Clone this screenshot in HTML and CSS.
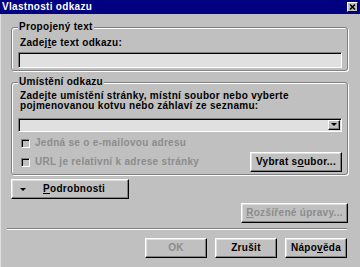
FILE: index.html
```html
<!DOCTYPE html>
<html lang="cs">
<head>
  <meta charset="UTF-8">
  <meta name="viewport" content="width=device-width, initial-scale=1.0">
  <title>Vlastnosti odkazu</title>
  <link rel="stylesheet" href="styles.css">
</head>
<body>
  <div class="dialog">
    <div class="titlebar">
      <span class="title">Vlastnosti odkazu</span>
      <span class="close-btn">
        <svg width="9" height="8" viewBox="0 0 9 8">
          <path d="M2 1.5 L7 6.5 M7 1.5 L2 6.5" stroke="#000" stroke-width="1.6" fill="none" />
        </svg>
      </span>
    </div>

    <div class="content">
      <fieldset class="group group-text">
        <legend>Propojený text</legend>
        <label class="field-label">Zadej<u>t</u>e text odkazu:</label>
        <div class="textbox"></div>
      </fieldset>

      <fieldset class="group group-place">
        <legend>Umístění odkazu</legend>
        <p class="hint">Zadejte umístění stránky, místní soubor nebo vyberte<br>pojmenovanou kotvu nebo záhlaví ze seznamu:</p>
        <div class="combo">
          <span class="combo-arrow"></span>
        </div>
        <div class="check disabled">
          <span class="box"></span>
          <span>Jedná se o e-mailovou adresu</span>
        </div>
        <div class="check-row">
          <div class="check disabled">
            <span class="box"></span>
            <span>URL je relativní k adrese stránky</span>
          </div>
          <button class="btn btn-browse">Vybrat s<u>o</u>ubor...</button>
        </div>
      </fieldset>

      <button class="btn btn-more">
        <span class="more-arrow"></span>
        <span class="more-text"><u>P</u>odrobnosti</span>
      </button>

      <div class="advanced-row">
        <button class="btn btn-advanced" disabled><u>R</u>ozšířené úpravy...</button>
      </div>

      <div class="separator"></div>

      <div class="footer">
        <button class="btn" disabled>OK</button>
        <button class="btn">Zrušit</button>
        <button class="btn">Nápo<u>v</u>ěda</button>
      </div>
    </div>
  </div>
</body>
</html>
```

FILE: styles.css
```css
body {
  margin: 0;
  background-color: #c0c0c0;
}

.dialog {
  width: 360px;
  height: 267px;
  overflow: hidden;
  background-color: #c0c0c0;
  box-shadow: inset 1px 0 0 #dfdfdf;
  font-family: "Liberation Sans", Arial, sans-serif;
  font-size: 10px;
  font-weight: bold;
  letter-spacing: 0.3px;
  color: #000;
}

.titlebar {
  height: 14px;
  background-color: #000080;
  color: #fff;
  display: flex;
  justify-content: space-between;
  align-items: center;
  padding: 0 2px;
  line-height: 14px;
}

.close-btn {
  box-sizing: border-box;
  width: 11px;
  height: 10px;
  background-color: #c0c0c0;
  border: 1px solid;
  border-color: #fff #000 #000 #fff;
  display: flex;
  align-items: center;
  justify-content: center;
}

.close-btn svg {
  display: block;
}

.content {
  padding: 7px 12px 0 11px;
}

.group {
  margin: 0;
  min-width: 0;
  padding: 4px 5px 2px 6px;
  border: 1px solid #808080;
  border-radius: 3px;
  box-shadow: inset 1px 1px 0 #fff, 1px 1px 0 #fff;
}

.group legend {
  padding: 0 1px;
  line-height: 12px;
  background-color: #c0c0c0;
}

.group-place {
  margin-top: 5px;
  padding-top: 3px;
}

.field-label {
  display: block;
  line-height: 12px;
  padding-left: 2px;
  margin-bottom: 3px;
}

.textbox,
.combo {
  box-sizing: border-box;
  height: 16px;
  background-color: #e0e0e0;
  border: 1px solid;
  border-color: #808080 #fff #fff #808080;
  box-shadow: inset 1px 1px 0 #000, inset -1px -1px 0 #dfdfdf;
}

.hint {
  margin: 0;
  padding-left: 2px;
  line-height: 10px;
}

.combo {
  margin-top: 7px;
  height: 14px;
  display: flex;
  justify-content: flex-end;
  align-items: center;
  padding-right: 1px;
}

.combo-arrow {
  box-sizing: border-box;
  width: 12px;
  height: 10px;
  background-color: #c0c0c0;
  border: 1px solid;
  border-color: #fff #000 #000 #fff;
  box-shadow: inset -1px -1px 0 #808080;
  display: flex;
  align-items: center;
  justify-content: center;
}

.combo-arrow::after {
  content: "";
  border-left: 3px solid transparent;
  border-right: 3px solid transparent;
  border-top: 3px solid #000;
  margin-top: -1px;
}

.check {
  display: flex;
  align-items: center;
  line-height: 12px;
  padding-left: 3px;
  margin-top: 5px;
}

.check .box {
  box-sizing: border-box;
  width: 9px;
  height: 9px;
  margin-right: 5px;
  background-color: #c0c0c0;
  border: 1px solid;
  border-color: #808080 #fff #fff #808080;
  box-shadow: inset 1px 1px 0 #000;
}

.disabled {
  color: #8c8c8c;
}

.check-row {
  display: flex;
  justify-content: space-between;
  align-items: center;
  margin-top: 3px;
}

.check-row .check {
  margin-top: 0;
}

.btn {
  box-sizing: border-box;
  height: 20px;
  width: 62px;
  padding: 0;
  background-color: #c0c0c0;
  border: 1px solid;
  border-color: #fff #000 #000 #fff;
  box-shadow: inset -1px -1px 0 #808080, inset 1px 1px 0 #dfdfdf;
  font-family: inherit;
  font-size: inherit;
  font-weight: inherit;
  letter-spacing: inherit;
  color: #000;
  line-height: 18px;
}

.btn:disabled {
  color: #8c8c8c;
}

.btn-browse {
  width: 92px;
}

.btn-more {
  margin-top: 4px;
  width: 118px;
  display: flex;
  align-items: center;
  padding-left: 8px;
}

.more-arrow {
  width: 0;
  height: 0;
  border-left: 3px solid transparent;
  border-right: 3px solid transparent;
  border-top: 3px solid #000;
}

.more-text {
  margin-left: 17px;
}

.advanced-row {
  display: flex;
  justify-content: flex-end;
  margin-top: 4px;
}

.btn-advanced {
  width: 107px;
}

.separator {
  margin: 5px 1px 0 -4px;
  border-top: 1px solid #808080;
  border-bottom: 1px solid #fff;
}

.footer {
  display: flex;
  justify-content: flex-end;
  gap: 8px;
  margin-top: 8px;
  padding-right: 1px;
}
```
